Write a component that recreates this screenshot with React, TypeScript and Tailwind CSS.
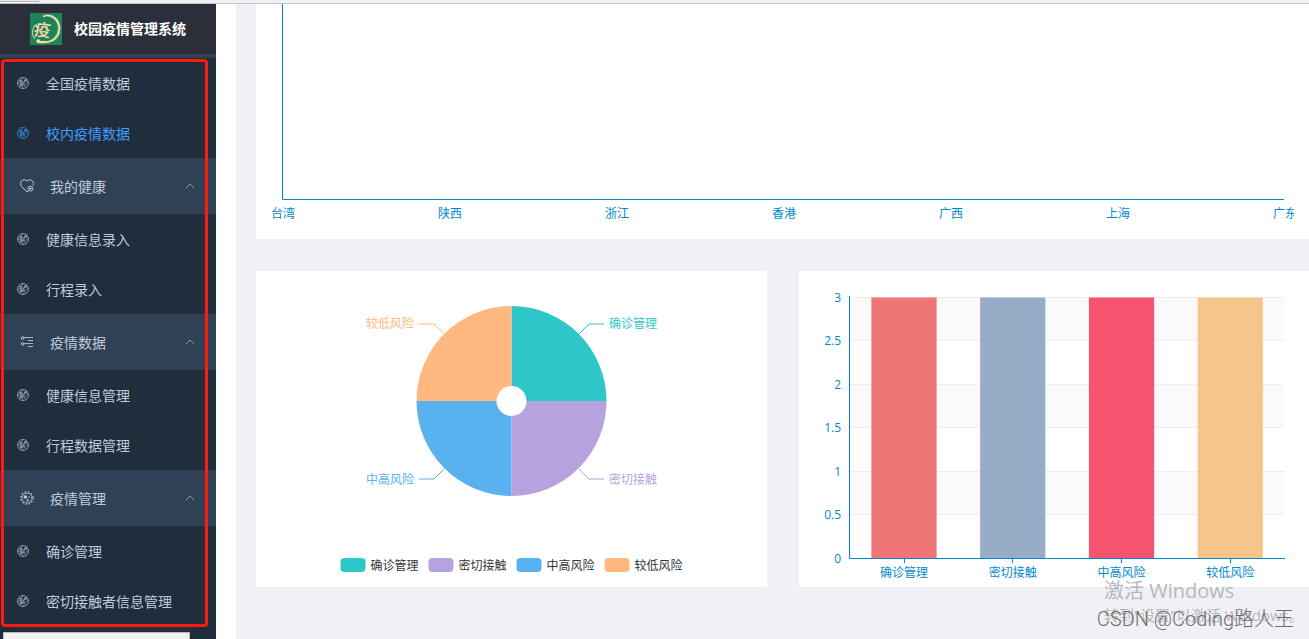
import { ChevronUp } from 'lucide-react';

interface MenuItem {
    label: string;
    active?: boolean;
}

interface MenuGroup {
    title?: string;
    icon?: 'heart' | 'list' | 'virus';
    items: MenuItem[];
}

const menu: MenuGroup[] = [
    { items: [{ label: '全国疫情数据' }, { label: '校内疫情数据', active: true }] },
    { title: '我的健康', icon: 'heart', items: [{ label: '健康信息录入' }, { label: '行程录入' }] },
    { title: '疫情数据', icon: 'list', items: [{ label: '健康信息管理' }, { label: '行程数据管理' }] },
    { title: '疫情管理', icon: 'virus', items: [{ label: '确诊管理' }, { label: '密切接触者信息管理' }] },
];

const provinces = ['台湾', '陕西', '浙江', '香港', '广西', '上海', '广东'];

const slices = [
    { name: '确诊管理', color: '#2ec7c9', path: 'M255.5 35A95 95 0 0 1 350.5 130H255.5Z', line: '323,63 333,53 348,53', x: 353, y: 57, anchor: 'start' as const },
    { name: '密切接触', color: '#b6a2de', path: 'M350.5 130A95 95 0 0 1 255.5 225V130Z', line: '323,198 333,208 348,208', x: 353, y: 213, anchor: 'start' as const },
    { name: '中高风险', color: '#5ab1ef', path: 'M255.5 225A95 95 0 0 1 160.5 130H255.5Z', line: '188,198 178,208 163,208', x: 158, y: 213, anchor: 'end' as const },
    { name: '较低风险', color: '#ffb980', path: 'M160.5 130A95 95 0 0 1 255.5 35V130Z', line: '188,63 178,53 163,53', x: 158, y: 57, anchor: 'end' as const },
];

const bars = [
    { name: '确诊管理', value: 3, color: '#ef7576' },
    { name: '密切接触', value: 3, color: '#98abc7' },
    { name: '中高风险', value: 3, color: '#f5536f' },
    { name: '较低风险', value: 3, color: '#f5c58b' },
];

const ticks = [3, 2.5, 2, 1.5, 1, 0.5, 0];

function DotIcon() {
    return (
        <svg className="size-3 shrink-0" viewBox="0 0 12 12" fill="none" stroke="currentColor" strokeWidth="0.7" opacity="0.75">
            <circle cx="6" cy="6" r="5.5" strokeWidth="0.9" />
            <path d="M2 3L9 10.2M2.6 9.6L9.6 2.4M6 .8L2.6 5L4.6 8L6.4 11M11 5L8 8L4.5 7.6M1 6.5L4 5.5" />
            <circle cx="6" cy="6" r="1.3" />
            <circle cx="8.6" cy="3.4" r="1" fill="currentColor" />
            <circle cx="4.2" cy="3.6" r="0.7" fill="currentColor" />
            <circle cx="3.8" cy="8.4" r="0.8" fill="currentColor" />
        </svg>
    );
}

function GroupIcon({ name }: { name: MenuGroup['icon'] }) {
    if (name === 'heart') {
        return (
            <svg className="size-[14px]" viewBox="0 0 14 14" fill="none" stroke="currentColor">
                <path d="M7 13L1.7 7.5C-0.2 5.4 .4 2 2.8 1.1C4.4 .5 6 1 7 2.3C8 1 9.6 .5 11.2 1.1C13.3 1.9 14 4.3 13 6.3" />
                <path d="M7 13L8.5 11.9" />
                <circle cx="10.4" cy="9.6" r="2.5" strokeWidth="0.9" />
                <path d="M10.4 8.2V11M9 9.6H11.8" strokeWidth="0.9" />
            </svg>
        );
    }
    if (name === 'list') {
        return (
            <svg className="size-[14px]" viewBox="0 0 14 14" fill="none" stroke="currentColor">
                <circle cx="2.7" cy="3" r="1.3" />
                <circle cx="2.7" cy="9" r="1.3" />
                <path d="M4.2 2.5H13M8 5.5H13M4.2 8.5H13M8 11.5H13" opacity="0.85" />
            </svg>
        );
    }
    return (
        <svg className="size-[14px]" viewBox="0 0 14 14" fill="none" stroke="currentColor">
            <circle cx="7" cy="7" r="6.2" strokeWidth="1.2" strokeDasharray="1.5 1.75" />
            <circle cx="7" cy="7" r="5" strokeWidth="0.8" />
            <circle cx="5.4" cy="6" r="1.8" fill="currentColor" stroke="none" />
            <circle cx="9" cy="6.2" r="0.8" fill="currentColor" stroke="none" />
            <circle cx="7.6" cy="9.4" r="1.1" fill="currentColor" stroke="none" />
        </svg>
    );
}

function Logo() {
    return (
        <svg className="size-8" viewBox="0 0 32 32">
            <rect width="32" height="32" fill="#1c8459" />
            <path d="M13 3.5C22-.5 30 7 29.5 16.5C29 25.5 20 31.5 10 28.5" fill="none" stroke="#f6d7a7" strokeWidth="1.8" />
            <path d="M18 2.8C26 4.5 30 12 27.8 19C26 25 21 28.5 15 29" fill="none" stroke="#f6d7a7" strokeWidth="0.9" />
            <path d="M5 12C1.5 17 2 23 5 26" fill="none" stroke="#f6d7a7" strokeWidth="1" />
            <path d="M6 27L9 26L11 29L14 27.5L17 29.5L12 30.5L7 30Z" fill="#f6d7a7" />
            <text x="4" y="23" fontSize="17" fontWeight="500" fill="#f6d7a7" transform="rotate(6 12 16)">疫</text>
        </svg>
    );
}

function Sidebar() {
    return (
        <aside className="relative flex w-[216px] shrink-0 flex-col bg-[#1f2d3d] text-sm text-[#bfcbd9]">
            <header className="flex h-[50px] shrink-0 items-center gap-3 bg-[#2b2f3a] pl-[30px]">
                <Logo />
                <h1 className="font-bold text-white">校园疫情管理系统</h1>
            </header>
            <nav className="flex flex-col border-t-4 border-[#304156]">
                {menu.map((group, i) => (
                    <div key={i}>
                        {group.title && (
                            <button className="flex h-14 w-full items-center bg-[#304156] pr-[18px] pl-5">
                                <GroupIcon name={group.icon} />
                                <span className="ml-4 pt-0.5">{group.title}</span>
                                <ChevronUp className="ml-auto size-4 text-[#909399]" strokeWidth={1.5} />
                            </button>
                        )}
                        {group.items.map((item) => (
                            <a
                                key={item.label}
                                href="#"
                                className={`flex h-[50px] items-center gap-[17px] pl-[17px] ${item.active ? 'text-[#409eff]' : ''}`}
                            >
                                <DotIcon />
                                <span className="pt-0.5">{item.label}</span>
                            </a>
                        ))}
                    </div>
                ))}
            </nav>
            <div className="pointer-events-none absolute top-[55px] left-px h-[568px] w-[207px] rounded border-[3px] border-[#ff1a10]" />
            <div className="absolute top-[628px] left-[3px] h-8 w-[187px] border border-[#bdbdbd] bg-[#f2f2f2]" />
        </aside>
    );
}

function ProvinceChart() {
    return (
        <svg className="block w-full" viewBox="0 0 1053 235" fontSize="12">
            <path d="M26.5 0V195.5H1028" fill="none" stroke="#008acd" />
            <svg x="15" y="0" width="1023" height="235">
                {provinces.map((name, i) => (
                    <text key={name} x={12 + i * 167} y="214" textAnchor="middle" fill="#008acd">
                        {name}
                    </text>
                ))}
            </svg>
        </svg>
    );
}

function RiskPie() {
    return (
        <svg className="block w-full" viewBox="0 0 511 316" fontSize="12">
            {slices.map((slice) => (
                <g key={slice.name}>
                    <path d={slice.path} fill={slice.color} />
                    <polyline points={slice.line} fill="none" stroke={slice.color} />
                    <text x={slice.x} y={slice.y} textAnchor={slice.anchor} fill={slice.color}>
                        {slice.name}
                    </text>
                </g>
            ))}
            <circle cx="255.5" cy="130" r="15" fill="#fff" />
            {slices.map((slice, i) => (
                <g key={slice.name}>
                    <rect x={84.5 + i * 88} y="287" width="25" height="14" rx="4" fill={slice.color} />
                    <text x={114.5 + i * 88} y="299" fill="#333">
                        {slice.name}
                    </text>
                </g>
            ))}
        </svg>
    );
}

function RiskBars() {
    const bottom = 287;
    const step = 87;

    return (
        <svg className="block w-full" viewBox="0 0 510 316" fontSize="12">
            {[26, 113, 200].map((y) => (
                <rect key={y} x="51" y={y} width="434" height="44" fill="#fafafa" />
            ))}
            {ticks.map((tick) => {
                const y = Math.floor(bottom - tick * step);
                return (
                    <g key={tick}>
                        <path d={`M51 ${y + 0.5}H485`} stroke="#eee" />
                        <text x="42" y={y + 5} textAnchor="end" fill="#008acd">
                            {tick}
                        </text>
                    </g>
                );
            })}
            {bars.map((bar, i) => {
                const center = 105 + i * 108.75;
                return (
                    <g key={bar.name}>
                        <rect x={center - 32.6} y={bottom - bar.value * step + 0.5} width="65.2" height={bar.value * step} fill={bar.color} />
                        <path d={`M${Math.floor(center) + 0.5} ${bottom}v5`} stroke="#008acd" />
                        <text x={center} y="306" textAnchor="middle" fill="#008acd">
                            {bar.name}
                        </text>
                    </g>
                );
            })}
            <path d="M50.5 25V287.5H486" fill="none" stroke="#008acd" />
        </svg>
    );
}

export default function App() {
    return (
        <div className="relative flex h-screen flex-col overflow-hidden bg-white font-['Open_Sans','Noto_Sans_CJK_SC',sans-serif]">
            <div className="h-1 shrink-0 border-b border-[#c4c4c4] bg-[#f1f1f1]">
                <div className="h-0.5 w-[39px] border-r border-b border-[#bbb] bg-[#e6e6e6]" />
            </div>
            <div className="flex min-h-0 flex-1">
                <Sidebar />
                <main className="ml-5 flex min-w-0 flex-1 flex-col gap-8 bg-[#f0f1f5] pl-5">
                    <section className="bg-white">
                        <ProvinceChart />
                    </section>
                    <div className="grid grid-cols-[511fr_510fr] gap-8">
                        <section className="bg-white">
                            <RiskPie />
                        </section>
                        <section className="bg-white">
                            <RiskBars />
                        </section>
                    </div>
                </main>
            </div>
            <div className="pointer-events-none absolute right-2 bottom-3 w-[197px] whitespace-nowrap text-[#b8b8ba]">
                <p className="text-xl leading-6">激活 Windows</p>
                <p className="text-[15px] leading-6">转到"设置"以激活 Windows。</p>
            </div>
            <p className="pointer-events-none absolute right-[15px] bottom-2 font-['Roboto','Noto_Sans_CJK_SC',sans-serif] text-xl leading-6 font-light whitespace-nowrap text-[#6c6c6f]">
                CSDN @Coding路人王
            </p>
        </div>
    );
}
